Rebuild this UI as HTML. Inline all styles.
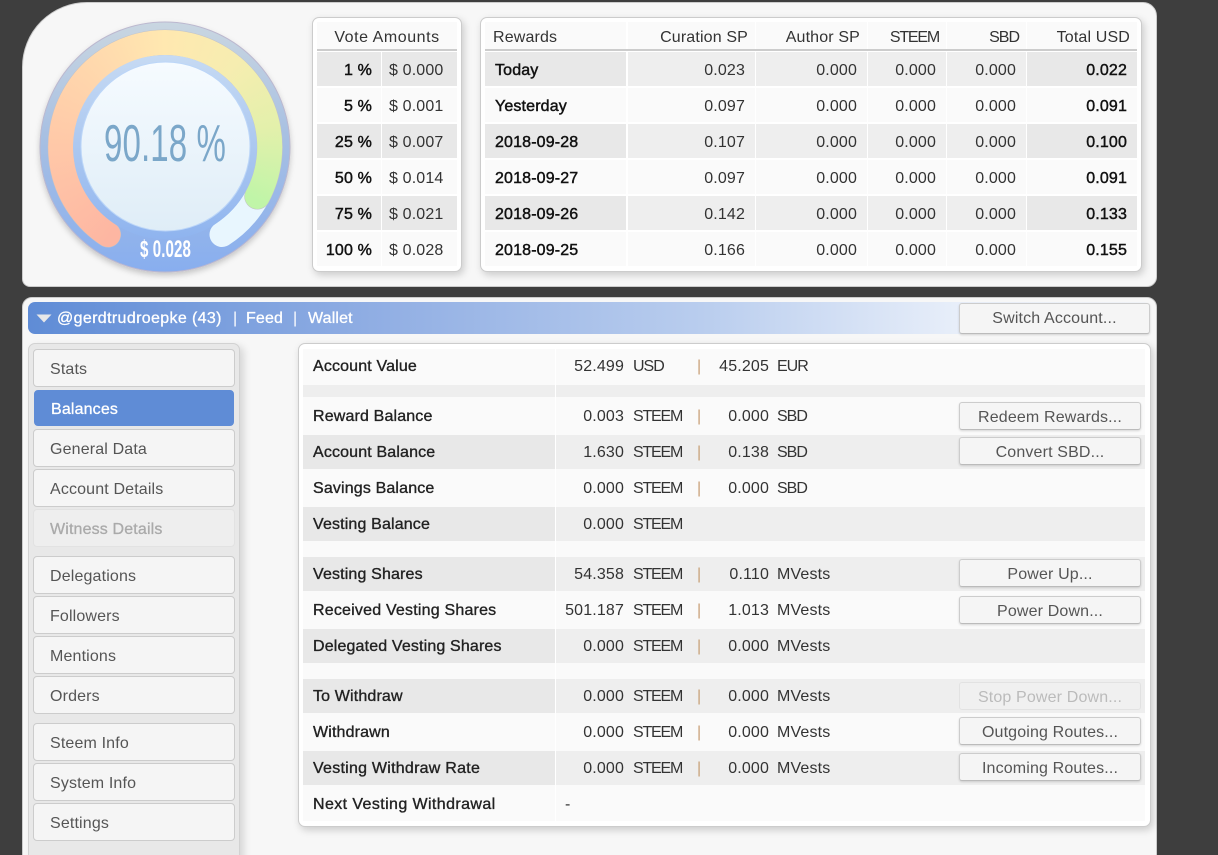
<!DOCTYPE html>
<html><head><meta charset="utf-8"><style>
html,body{margin:0;padding:0;width:1218px;height:855px;overflow:hidden;background:#3e3e3e}
body{position:relative;font-family:"Liberation Sans",sans-serif;font-size:16px;color:#333;letter-spacing:.15px}
div,span{position:absolute;box-sizing:border-box}
span{white-space:nowrap}
.panel{background:#f7f7f7;border:1px solid #ccc;left:22px;width:1135px}
.box{background:#fff;border:1px solid #ccc;border-radius:7px;box-shadow:2px 3px 8px rgba(0,0,0,.18)}
.row{height:34px;line-height:36px}
.t{line-height:37px}
.c{top:0;height:34px;background:#fafafa}
.g .c{background:#eee}
.g .c.f{background:#e8e8e8}
.h{top:0;height:27px;line-height:31px;background:#fafafa;color:#333}
.hs{top:22px;line-height:31px;color:#333}
.line{height:2px;background:#ccc}
.b{color:#111;-webkit-text-stroke:.45px #111}
.lb{color:#222;-webkit-text-stroke:.35px #222}
.m{left:33px;width:202px;height:38px;line-height:39px;background:#f5f5f5;border:1px solid #ccc;border-radius:4px;padding-left:16px;color:#555}
.m.on{left:34px;width:200px;background:#5f8cd6;border-color:#5f8cd6;color:#fff;height:36px;line-height:37px;padding-left:16px;-webkit-text-stroke:.3px #fff}
.m.off{background:#eee;border-color:#e2e2e2;color:#aaa;-webkit-text-stroke:.3px #aaa}
.btn{left:959px;width:182px;height:28px;line-height:29px;background:#f5f5f5;border:1px solid #ccc;border-bottom-color:#bbb;border-radius:3px;text-align:center;color:#555;box-shadow:0 1px 2px rgba(0,0,0,.15)}
.btn.off{color:#bbb;border-color:#e2e2e2;background:#f0f0f0;box-shadow:none}
.p{color:#c9a27a;left:697px}
.v1{right:594px}.u1{left:633px;letter-spacing:-1.2px}.v2{right:449px}.u2{left:777px}
.s{letter-spacing:-1px}
.l{left:313px}
.tt{top:302px;line-height:34px;color:#fff;-webkit-text-stroke:.3px #fff}
</style></head><body>

<div class="panel" style="top:2px;height:285px;border-radius:65px 14px 10px 8px"></div>

<svg style="position:absolute;left:0;top:0" width="320" height="290" viewBox="0 0 320 290">
<defs>
<linearGradient id="o" x1="0" y1="0" x2="0" y2="1"><stop offset="0" stop-color="#c9d6e1"/><stop offset=".45" stop-color="#a8c0e2"/><stop offset="1" stop-color="#88aeef"/></linearGradient>
<linearGradient id="ri" x1="0" y1="0" x2="0" y2="1"><stop offset="0" stop-color="#c6daf3"/><stop offset=".6" stop-color="#a6c4f0"/><stop offset="1" stop-color="#8fb4ef"/></linearGradient>
<linearGradient id="inn" x1="0" y1="0" x2="0" y2="1"><stop offset="0" stop-color="#f6fbff"/><stop offset="1" stop-color="#dfedf7"/></linearGradient>
<filter id="sh" x="-10%" y="-10%" width="120%" height="125%"><feDropShadow dx="0" dy="3" stdDeviation="3" flood-color="#000" flood-opacity=".2"/></filter>
<mask id="am" maskUnits="userSpaceOnUse" x="0" y="0" width="320" height="290"><path d="M108 234.5A104.5 104.5 0 1 1 257.3 196.5" fill="none" stroke="#fff" stroke-width="25" stroke-linecap="round"/></mask>
</defs>
<circle cx="165" cy="147" r="125" fill="url(#o)" stroke="#bcb8cf" stroke-width="1" filter="url(#sh)"/>
<path d="M222 234.5A104.5 104.5 0 0 0 257.3 196.5" fill="none" stroke="#e8f6fe" stroke-width="25" stroke-linecap="round"/>
<path d="M108 234.5A104.5 104.5 0 1 1 257.3 196.5" fill="none" stroke="#c2c2c8" stroke-width="26" stroke-linecap="round"/>
<foreignObject x="40" y="22" width="250" height="250" mask="url(#am)"><div xmlns="http://www.w3.org/1999/xhtml" style="position:absolute;left:0;top:0;width:250px;height:250px;background:conic-gradient(from 165deg,#fdb6a2 0deg,#fdb6a2 46deg,#ffc8a8 105deg,#ffdcae 165deg,#ffe8b0 195deg,#f6edb0 235deg,#e3f0ab 275deg,#c0f5a8 315deg,#c0f5a8 360deg)"></div></foreignObject>
<circle cx="165" cy="147" r="92" fill="url(#ri)"/>
<circle cx="165.5" cy="146.5" r="84.5" fill="url(#inn)" stroke="#bcd6f8" stroke-width="1"/>
<text x="104" y="161" font-family="Liberation Sans" font-size="52" fill="#7ba7c9" textLength="122" lengthAdjust="spacingAndGlyphs">90.18 %</text>
<text x="140" y="257" font-family="Liberation Sans" font-size="24" font-weight="bold" fill="#fff" textLength="51" lengthAdjust="spacingAndGlyphs">$ 0.028</text>
</svg>

<!-- Vote amounts -->
<div class="box" style="left:312px;top:17px;width:150px;height:255px"></div>
<div class="h" style="left:317px;top:22px;width:140px;text-align:center;letter-spacing:.55px">Vote Amounts</div>
<div class="line" style="left:317px;top:49px;width:140px"></div>
<div class="row t g" style="left:317px;top:52px;width:140px"><div class="c f" style="left:0;width:64px"></div><div class="c f" style="left:65px;width:75px"></div><span class="b" style="right:85px">1 %</span><span style="left:72px">$ 0.000</span></div>
<div class="row t" style="left:317px;top:88px;width:140px"><div class="c f" style="left:0;width:64px"></div><div class="c f" style="left:65px;width:75px"></div><span class="b" style="right:85px">5 %</span><span style="left:72px">$ 0.001</span></div>
<div class="row t g" style="left:317px;top:124px;width:140px"><div class="c f" style="left:0;width:64px"></div><div class="c f" style="left:65px;width:75px"></div><span class="b" style="right:85px">25 %</span><span style="left:72px">$ 0.007</span></div>
<div class="row t" style="left:317px;top:160px;width:140px"><div class="c f" style="left:0;width:64px"></div><div class="c f" style="left:65px;width:75px"></div><span class="b" style="right:85px">50 %</span><span style="left:72px">$ 0.014</span></div>
<div class="row t g" style="left:317px;top:196px;width:140px"><div class="c f" style="left:0;width:64px"></div><div class="c f" style="left:65px;width:75px"></div><span class="b" style="right:85px">75 %</span><span style="left:72px">$ 0.021</span></div>
<div class="row t" style="left:317px;top:232px;width:140px"><div class="c f" style="left:0;width:64px"></div><div class="c f" style="left:65px;width:75px"></div><span class="b" style="right:85px">100 %</span><span style="left:72px">$ 0.028</span></div>

<!-- Rewards -->
<div class="box" style="left:480px;top:17px;width:662px;height:255px"></div>
<div class="h" style="left:485px;top:22px;width:141px;padding-left:8px">Rewards</div>
<div class="h" style="left:628px;top:22px;width:127px"></div><div class="h" style="left:756px;top:22px;width:111px"></div><div class="h" style="left:868px;top:22px;width:78px"></div><div class="h" style="left:947px;top:22px;width:79px"></div><div class="h" style="left:1027px;top:22px;width:110px"></div>
<span class="hs" style="right:470px">Curation SP</span>
<span class="hs" style="right:358px">Author SP</span>
<span class="hs" style="right:279px;letter-spacing:-1.2px">STEEM</span>
<span class="hs" style="right:199px;letter-spacing:-1px">SBD</span>
<span class="hs" style="right:88px">Total USD</span>
<div class="line" style="left:485px;top:49px;width:652px"></div>

<div class="row t g" style="left:0;top:52px;width:1218px"><div class="c f" style="left:485px;width:141px"></div><div class="c" style="left:628px;width:127px"></div><div class="c" style="left:756px;width:111px"></div><div class="c" style="left:868px;width:78px"></div><div class="c" style="left:947px;width:79px"></div><div class="c f" style="left:1027px;width:110px"></div><span class="b" style="left:495px">Today</span><span style="right:473px">0.023</span><span style="right:361px">0.000</span><span style="right:282px">0.000</span><span style="right:202px">0.000</span><span class="b" style="right:91px">0.022</span></div>
<div class="row t" style="left:0;top:88px;width:1218px"><div class="c" style="left:485px;width:141px"></div><div class="c" style="left:628px;width:127px"></div><div class="c" style="left:756px;width:111px"></div><div class="c" style="left:868px;width:78px"></div><div class="c" style="left:947px;width:79px"></div><div class="c" style="left:1027px;width:110px"></div><span class="b" style="left:495px">Yesterday</span><span style="right:473px">0.097</span><span style="right:361px">0.000</span><span style="right:282px">0.000</span><span style="right:202px">0.000</span><span class="b" style="right:91px">0.091</span></div>
<div class="row t g" style="left:0;top:124px;width:1218px"><div class="c f" style="left:485px;width:141px"></div><div class="c" style="left:628px;width:127px"></div><div class="c" style="left:756px;width:111px"></div><div class="c" style="left:868px;width:78px"></div><div class="c" style="left:947px;width:79px"></div><div class="c f" style="left:1027px;width:110px"></div><span class="b" style="left:495px">2018-09-28</span><span style="right:473px">0.107</span><span style="right:361px">0.000</span><span style="right:282px">0.000</span><span style="right:202px">0.000</span><span class="b" style="right:91px">0.100</span></div>
<div class="row t" style="left:0;top:160px;width:1218px"><div class="c" style="left:485px;width:141px"></div><div class="c" style="left:628px;width:127px"></div><div class="c" style="left:756px;width:111px"></div><div class="c" style="left:868px;width:78px"></div><div class="c" style="left:947px;width:79px"></div><div class="c" style="left:1027px;width:110px"></div><span class="b" style="left:495px">2018-09-27</span><span style="right:473px">0.097</span><span style="right:361px">0.000</span><span style="right:282px">0.000</span><span style="right:202px">0.000</span><span class="b" style="right:91px">0.091</span></div>
<div class="row t g" style="left:0;top:196px;width:1218px"><div class="c f" style="left:485px;width:141px"></div><div class="c" style="left:628px;width:127px"></div><div class="c" style="left:756px;width:111px"></div><div class="c" style="left:868px;width:78px"></div><div class="c" style="left:947px;width:79px"></div><div class="c f" style="left:1027px;width:110px"></div><span class="b" style="left:495px">2018-09-26</span><span style="right:473px">0.142</span><span style="right:361px">0.000</span><span style="right:282px">0.000</span><span style="right:202px">0.000</span><span class="b" style="right:91px">0.133</span></div>
<div class="row t" style="left:0;top:232px;width:1218px"><div class="c" style="left:485px;width:141px"></div><div class="c" style="left:628px;width:127px"></div><div class="c" style="left:756px;width:111px"></div><div class="c" style="left:868px;width:78px"></div><div class="c" style="left:947px;width:79px"></div><div class="c" style="left:1027px;width:110px"></div><span class="b" style="left:495px">2018-09-25</span><span style="right:473px">0.166</span><span style="right:361px">0.000</span><span style="right:282px">0.000</span><span style="right:202px">0.000</span><span class="b" style="right:91px">0.155</span></div>

<!-- Lower panel -->
<div class="panel" style="top:297px;height:570px;border-radius:10px"></div>
<div style="left:28px;top:302px;width:1122px;height:32px;border-radius:7px;background:linear-gradient(90deg,#5f8cd6 0%,#8fade3 30%,#b9cdee 60%,#eaf0fa 84%,#f3f5f9 100%)"></div>
<svg style="position:absolute;left:36px;top:314px" width="16" height="10"><path d="M0.5 0.5H15.5L8 8.5Z" fill="#e8e8e8"/></svg>
<span class="tt" style="left:57px;letter-spacing:.36px">@gerdtrudroepke (43)</span>
<span class="tt" style="left:233px;-webkit-text-stroke:0">|</span>
<span class="tt" style="left:246px">Feed</span>
<span class="tt" style="left:293px;-webkit-text-stroke:0">|</span>
<span class="tt" style="left:308px">Wallet</span>
<div class="btn" style="top:303px;width:191px;height:31px;line-height:30px">Switch Account...</div>

<!-- Sidebar -->
<div style="left:28px;top:343px;width:212px;height:530px;background:#e8e8e8;border:1px solid #d2d2d2;border-radius:7px;box-shadow:4px 3px 8px rgba(0,0,0,.13)"></div>
<div class="m" style="top:349px">Stats</div>
<div class="m on" style="top:390px">Balances</div>
<div class="m" style="top:429px">General Data</div>
<div class="m" style="top:469px">Account Details</div>
<div class="m off" style="top:509px">Witness Details</div>
<div class="m" style="top:556px">Delegations</div>
<div class="m" style="top:596px">Followers</div>
<div class="m" style="top:636px">Mentions</div>
<div class="m" style="top:676px">Orders</div>
<div class="m" style="top:723px">Steem Info</div>
<div class="m" style="top:763px">System Info</div>
<div class="m" style="top:803px">Settings</div>

<!-- Balances box -->
<div class="box" style="left:298px;top:343px;width:853px;height:484px"></div>
<div style="left:303px;top:349px;width:842px;height:472px;background:#fafafa"></div>
<div style="left:555px;top:349px;width:1px;height:472px;background:#fff"></div>
<div style="left:303px;top:385px;width:842px;height:12px;background:#eee"></div>
<div style="left:555px;top:385px;width:1px;height:12px;background:#fff"></div>

<div class="row" style="left:0;top:349px;width:1218px;height:36px;line-height:35px"><span class="l lb">Account Value</span><span class="v1">52.499</span><span class="u1" style="letter-spacing:-1px">USD</span><span class="p">|</span><span class="v2">45.205</span><span class="u2 s">EUR</span></div>
<div class="row" style="left:0;top:399px;width:1218px"><span class="l lb">Reward Balance</span><span class="v1">0.003</span><span class="u1">STEEM</span><span class="p">|</span><span class="v2">0.000</span><span class="u2 s">SBD</span></div>
<div class="row g" style="left:0;top:435px;width:1218px"><div class="c f" style="left:303px;width:252px"></div><div class="c" style="left:556px;width:589px"></div><span class="l lb">Account Balance</span><span class="v1">1.630</span><span class="u1">STEEM</span><span class="p">|</span><span class="v2">0.138</span><span class="u2 s">SBD</span></div>
<div class="row" style="left:0;top:471px;width:1218px"><span class="l lb">Savings Balance</span><span class="v1">0.000</span><span class="u1">STEEM</span><span class="p">|</span><span class="v2">0.000</span><span class="u2 s">SBD</span></div>
<div class="row g" style="left:0;top:507px;width:1218px"><div class="c f" style="left:303px;width:252px"></div><div class="c" style="left:556px;width:589px"></div><span class="l lb">Vesting Balance</span><span class="v1">0.000</span><span class="u1">STEEM</span></div>
<div class="row g" style="left:0;top:557px;width:1218px"><div class="c f" style="left:303px;width:252px"></div><div class="c" style="left:556px;width:589px"></div><span class="l lb">Vesting Shares</span><span class="v1">54.358</span><span class="u1">STEEM</span><span class="p">|</span><span class="v2">0.110</span><span class="u2">MVests</span></div>
<div class="row" style="left:0;top:593px;width:1218px"><span class="l lb" style="letter-spacing:.2px">Received Vesting Shares</span><span class="v1">501.187</span><span class="u1">STEEM</span><span class="p">|</span><span class="v2">1.013</span><span class="u2">MVests</span></div>
<div class="row g" style="left:0;top:629px;width:1218px"><div class="c f" style="left:303px;width:252px"></div><div class="c" style="left:556px;width:589px"></div><span class="l lb">Delegated Vesting Shares</span><span class="v1">0.000</span><span class="u1">STEEM</span><span class="p">|</span><span class="v2">0.000</span><span class="u2">MVests</span></div>
<div class="row g" style="left:0;top:679px;width:1218px"><div class="c f" style="left:303px;width:252px"></div><div class="c" style="left:556px;width:589px"></div><span class="l lb">To Withdraw</span><span class="v1">0.000</span><span class="u1">STEEM</span><span class="p">|</span><span class="v2">0.000</span><span class="u2">MVests</span></div>
<div class="row" style="left:0;top:715px;width:1218px"><span class="l lb">Withdrawn</span><span class="v1">0.000</span><span class="u1">STEEM</span><span class="p">|</span><span class="v2">0.000</span><span class="u2">MVests</span></div>
<div class="row g" style="left:0;top:751px;width:1218px"><div class="c f" style="left:303px;width:252px"></div><div class="c" style="left:556px;width:589px"></div><span class="l lb" style="letter-spacing:.25px">Vesting Withdraw Rate</span><span class="v1">0.000</span><span class="u1">STEEM</span><span class="p">|</span><span class="v2">0.000</span><span class="u2">MVests</span></div>
<div class="row" style="left:0;top:787px;width:1218px"><span class="l lb" style="letter-spacing:.4px">Next Vesting Withdrawal</span><span style="left:565px">-</span></div>

<div class="btn" style="top:402px">Redeem Rewards...</div>
<div class="btn" style="top:437px">Convert SBD...</div>
<div class="btn" style="top:559px;line-height:30px">Power Up...</div>
<div class="btn" style="top:596px">Power Down...</div>
<div class="btn off" style="top:682px">Stop Power Down...</div>
<div class="btn" style="top:717px">Outgoing Routes...</div>
<div class="btn" style="top:753px;line-height:30px">Incoming Routes...</div>
</body></html>
